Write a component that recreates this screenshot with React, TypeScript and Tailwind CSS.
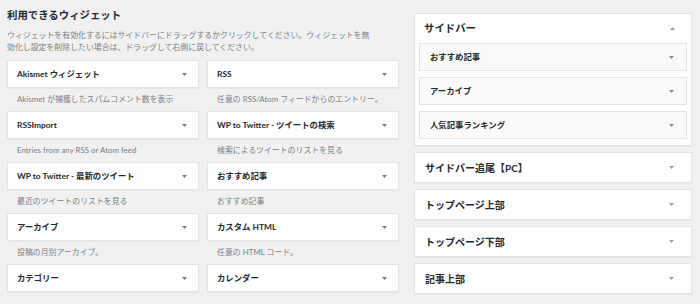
import React from "react";

const Caret = ({ up = false, color = "#7a7a7a" }: { up?: boolean; color?: string }) => (
  <svg width="5" height="3" viewBox="0 0 5 3" className="shrink-0">
    <polygon points={up ? "0,3 5,3 2.5,0" : "0,0 5,0 2.5,3"} fill={color} />
  </svg>
);

const widgets: [string, string][] = [
  ["Akismet ウィジェット", "Akismet が捕獲したスパムコメント数を表示"],
  ["RSS", "任意の RSS/Atom フィードからのエントリー。"],
  ["RSSImport", "Entries from any RSS or Atom feed"],
  ["WP to Twitter - ツイートの検索", "検索によるツイートのリストを見る"],
  ["WP to Twitter - 最新のツイート", "最近のツイートのリストを見る"],
  ["おすすめ記事", "おすすめ記事"],
  ["アーカイブ", "投稿の月別アーカイブ。"],
  ["カスタム HTML", "任意の HTML コード。"],
  ["カテゴリー", ""],
  ["カレンダー", ""],
];

const panels = ["サイドバー追尾【PC】", "トップページ上部", "トップページ下部", "記事上部"];
const inner = ["おすすめ記事", "アーカイブ", "人気記事ランキング"];

export default function App() {
  return (
    <div
      className="w-[700px] h-[304px] bg-[#f1f1f1] overflow-hidden flex"
      style={{ fontFamily: 'Lato, "Noto Sans CJK JP", "Noto Sans", sans-serif' }}
    >
      <div className="w-[399px] pl-[7px] shrink-0">
        <div className="mt-[8px] h-[14px] leading-[14px] text-[10.4px] font-bold text-[#23282d]">
          利用できるウィジェット
        </div>
        <div className="mt-[7px] text-[7.9px] leading-[12px] text-[#7a7e82]">
          ウィジェットを有効化するにはサイドバーにドラッグするかクリックしてください。ウィジェットを無
          <br />
          効化し設定を削除したい場合は、ドラッグして右側に戻してください。
        </div>
        <div className="mt-[7px] grid grid-cols-2 gap-x-[8px]">
          {widgets.map(([t, d]) => (
            <div key={t} className="flex flex-col">
              <div className="h-[28px] bg-white border border-[#e2e4e7] shadow-[0_1px_1px_rgba(0,0,0,0.04)] flex items-center justify-between pl-[9px] pr-[11px]">
                <span className="text-[8.4px] font-bold text-[#23282d] leading-none">{t}</span>
                <Caret />
              </div>
              <div className="h-[23px] flex items-center pl-[10px] text-[7.9px] text-[#7a7e82] leading-none">
                {d}
              </div>
            </div>
          ))}
        </div>
      </div>
      <div className="ml-[15px] w-[278px] pt-[13px] shrink-0">
        <div className="bg-white border border-[#e2e4e7] shadow-[0_1px_1px_rgba(0,0,0,0.04)]">
          <div className="h-[29px] flex items-center justify-between pl-[9px] pr-[16px]">
            <span className="text-[10.4px] font-bold text-[#23282d] leading-none">サイドバー</span>
            <Caret up color="#9a9ea3" />
          </div>
          <div className="px-[4px] pb-[6px] flex flex-col gap-[6px]">
            {inner.map((t) => (
              <div
                key={t}
                className="h-[28px] bg-[#fafafa] border border-[#e2e4e7] flex items-center justify-between pl-[10px] pr-[12px]"
              >
                <span className="text-[8.4px] font-bold text-[#23282d] leading-none">{t}</span>
                <Caret color="#8a8a8a" />
              </div>
            ))}
          </div>
        </div>
        <div className="mt-[6px] flex flex-col gap-[6px]">
          {panels.map((t) => (
            <div
              key={t}
              className="h-[31px] bg-white border border-[#e2e4e7] shadow-[0_1px_1px_rgba(0,0,0,0.04)] flex items-center justify-between pl-[10px] pr-[17px]"
            >
              <span className="text-[10px] font-bold text-[#23282d] leading-none">{t}</span>
              <Caret color="#9a9ea3" />
            </div>
          ))}
        </div>
      </div>
    </div>
  );
}
